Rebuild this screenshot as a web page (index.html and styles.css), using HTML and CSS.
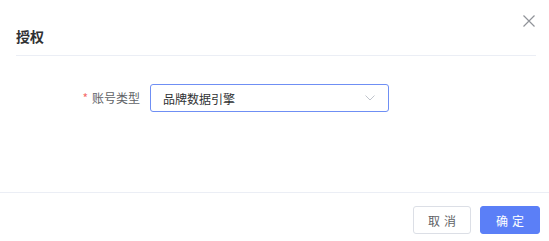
FILE: index.html
```html
<!DOCTYPE html>
<html lang="zh-CN">
<head>
<meta charset="utf-8">
<title>授权</title>
<link rel="stylesheet" href="styles.css">
</head>
<body>
<div class="dialog">
  <div class="dialog-header">
    <span class="dialog-title">授权</span>
    <button class="dialog-close" aria-label="关闭">
      <svg width="12" height="12" viewBox="0 0 12 12"><path d="M0.5 0.5 L11.5 11.5 M11.5 0.5 L0.5 11.5" stroke="#909399" stroke-width="1.2" fill="none"/></svg>
    </button>
  </div>
  <div class="dialog-body">
    <div class="form-item">
      <label class="form-label"><span class="required">*</span>账号类型</label>
      <div class="select">
        <span class="select-value">品牌数据引擎</span>
        <svg class="select-arrow" width="10" height="6" viewBox="0 0 10 6"><path d="M0.5 0.5 L5 5 L9.5 0.5" stroke="#c0c4cc" stroke-width="1" fill="none"/></svg>
      </div>
    </div>
  </div>
  <div class="dialog-footer">
    <button class="btn">取消</button>
    <button class="btn btn-primary">确定</button>
  </div>
</div>
</body>
</html>
```

FILE: styles.css
```css
html, body {
  margin: 0;
  padding: 0;
  background: #ffffff;
}
body {
  font-family: "Noto Sans CJK SC", "Noto Sans", sans-serif;
  color: #303133;
}
.dialog {
  width: 549px;
  height: 241px;
  position: relative;
  display: flex;
  flex-direction: column;
}
.dialog-header {
  margin: 0 13px 0 16px;
  padding-top: 26px;
  height: 29px;
  border-bottom: 1px solid #ebeef5;
}
.dialog-title {
  font-size: 14px;
  line-height: 20px;
  font-weight: bold;
  color: #303133;
  display: block;
}
.dialog-close {
  position: absolute;
  top: 15px;
  right: 14px;
  border: 0;
  padding: 0;
  background: none;
  width: 12px;
  height: 12px;
  display: flex;
}
.dialog-body {
  flex: 1;
  padding-top: 28px;
}
.form-item {
  display: flex;
  align-items: center;
}
.form-label {
  width: 150px;
  padding-right: 10px;
  box-sizing: border-box;
  text-align: right;
  font-size: 12px;
  color: #606266;
  line-height: 28px;
}
.required {
  color: #f56c6c;
  margin-right: 4px;
}
.select {
  width: 239px;
  height: 28px;
  box-sizing: border-box;
  border: 1px solid #6f8ff4;
  border-radius: 3px;
  display: flex;
  align-items: center;
  justify-content: space-between;
  padding: 0 13px 0 12px;
}
.select-value {
  font-size: 12px;
  color: #303133;
}
.dialog-footer {
  border-top: 1px solid #ebeef5;
  padding: 13px 9px 7px 0;
  display: flex;
  justify-content: flex-end;
  gap: 9px;
}
.btn {
  font-family: "Noto Sans CJK SC", "Noto Sans", sans-serif;
  height: 28px;
  width: 58px;
  box-sizing: border-box;
  border: 1px solid #dcdfe6;
  background: #ffffff;
  border-radius: 3px;
  font-size: 12px;
  letter-spacing: 4px;
  padding: 0 0 0 4px;
  color: #606266;
}
.btn-primary {
  width: 60px;
  background: #5b7ff7;
  border-color: #5b7ff7;
  color: #ffffff;
}
```
